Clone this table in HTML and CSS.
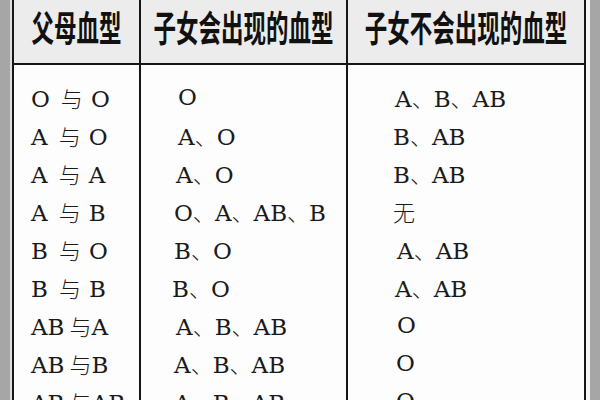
FILE: index.html
```html
<!DOCTYPE html>
<html lang="zh-CN">
<head>
<meta charset="utf-8">
<title>血型遗传表</title>
<link rel="stylesheet" href="styles.css">
</head>
<body>
<div class="page">
  <div class="edge"></div>
  <div class="sliver"></div>
  <div class="sheet">
    <div class="head">
      <div class="hc c1"><span class="ht">父母血型</span></div>
      <div class="hc c2"><span class="ht">子女会出现的血型</span></div>
      <div class="hc c3"><span class="ht">子女不会出现的血型</span></div>
    </div>
    <div class="body">
      <div class="col c1">
        <div class="row">O<span class="yu">与</span>O</div>
        <div class="row">A<span class="yu">与</span>O</div>
        <div class="row">A<span class="yu">与</span>A</div>
        <div class="row">A<span class="yu">与</span>B</div>
        <div class="row">B<span class="yu">与</span>O</div>
        <div class="row">B<span class="yu">与</span>B</div>
        <div class="row">AB<span class="yu tight">与</span>A</div>
        <div class="row">AB<span class="yu tight">与</span>B</div>
        <div class="row">AB<span class="yu tight">与</span>AB</div>
      </div>
      <div class="col c2">
        <div class="row in4">O</div>
        <div class="row in4">A<span class="dun">、</span>O</div>
        <div class="row in2">A<span class="dun">、</span>O</div>
        <div class="row">O<span class="dun">、</span>A<span class="dun">、</span>AB<span class="dun">、</span>B</div>
        <div class="row">B<span class="dun">、</span>O</div>
        <div class="row out2">B<span class="dun">、</span>O</div>
        <div class="row in2">A<span class="dun">、</span>B<span class="dun">、</span>AB</div>
        <div class="row">A<span class="dun">、</span>B<span class="dun">、</span>AB</div>
        <div class="row">A<span class="dun">、</span>B<span class="dun">、</span>AB</div>
      </div>
      <div class="col c3">
        <div class="row in2">A<span class="dun">、</span>B<span class="dun">、</span>AB</div>
        <div class="row">B<span class="dun">、</span>AB</div>
        <div class="row">B<span class="dun">、</span>AB</div>
        <div class="row"><span class="cn">无</span></div>
        <div class="row in4">A<span class="dun">、</span>AB</div>
        <div class="row in2">A<span class="dun">、</span>AB</div>
        <div class="row in4">O</div>
        <div class="row in3">O</div>
        <div class="row in3">O</div>
      </div>
    </div>
  </div>
  <div class="gap"></div>
  <div class="edge"></div>
</div>
</body>
</html>
```

FILE: styles.css
```css
html, body {
  margin: 0;
  padding: 0;
  background: #ffffff;
}

.page {
  display: flex;
  width: 600px;
  height: 400px;
  overflow: hidden;
}

.edge {
  width: 10px;
  flex: none;
  background: #a6a6a6;
}

.sliver {
  width: 2px;
  flex: none;
  background: #dedede;
}

.gap {
  width: 4px;
  flex: none;
  background: #f6f6f6;
}

.sheet {
  width: 570px;
  flex: none;
  border-left: 2px solid #161616;
  border-right: 2px solid #161616;
  display: flex;
  flex-direction: column;
}

.head {
  display: grid;
  grid-template-columns: 125px 207px 238px;
  height: 63px;
  border-bottom: 2px solid #161616;
  background: #ececec;
  flex: none;
}

.body {
  display: grid;
  grid-template-columns: 125px 207px 238px;
  flex: 1;
  background: #fdfdfd;
}

.c2, .c3 {
  border-left: 2px solid #161616;
}

.hc {
  display: flex;
  justify-content: center;
  align-items: flex-start;
}

.ht {
  display: inline-block;
  font-family: "Noto Sans CJK SC", sans-serif;
  font-weight: 700;
  font-size: 22.5px;
  line-height: 53px;
  color: #111111;
  transform: scaleY(1.6);
}

.col {
  padding-top: 13px;
  font-family: "DejaVu Serif", serif;
  font-size: 23px;
  color: #1a1a1a;
}

.col.c1 { padding-left: 17px; }
.col.c2 { padding-left: 33px; }
.col.c3 { padding-left: 45px; }

.row {
  height: 38px;
  line-height: 38px;
  white-space: nowrap;
}

.yu, .dun, .cn {
  font-family: "Noto Sans CJK SC", sans-serif;
  font-weight: 300;
  font-size: 22px;
}

.yu {
  margin: 0 8px 0 11px;
}

.yu.tight {
  margin: 0 0 0 5px;
}

.dun {
  font-size: 22px;
}

.in2 { padding-left: 2px; }
.in3 { padding-left: 3px; }
.in4 { padding-left: 4px; }
.out2 { margin-left: -2px; }
```
